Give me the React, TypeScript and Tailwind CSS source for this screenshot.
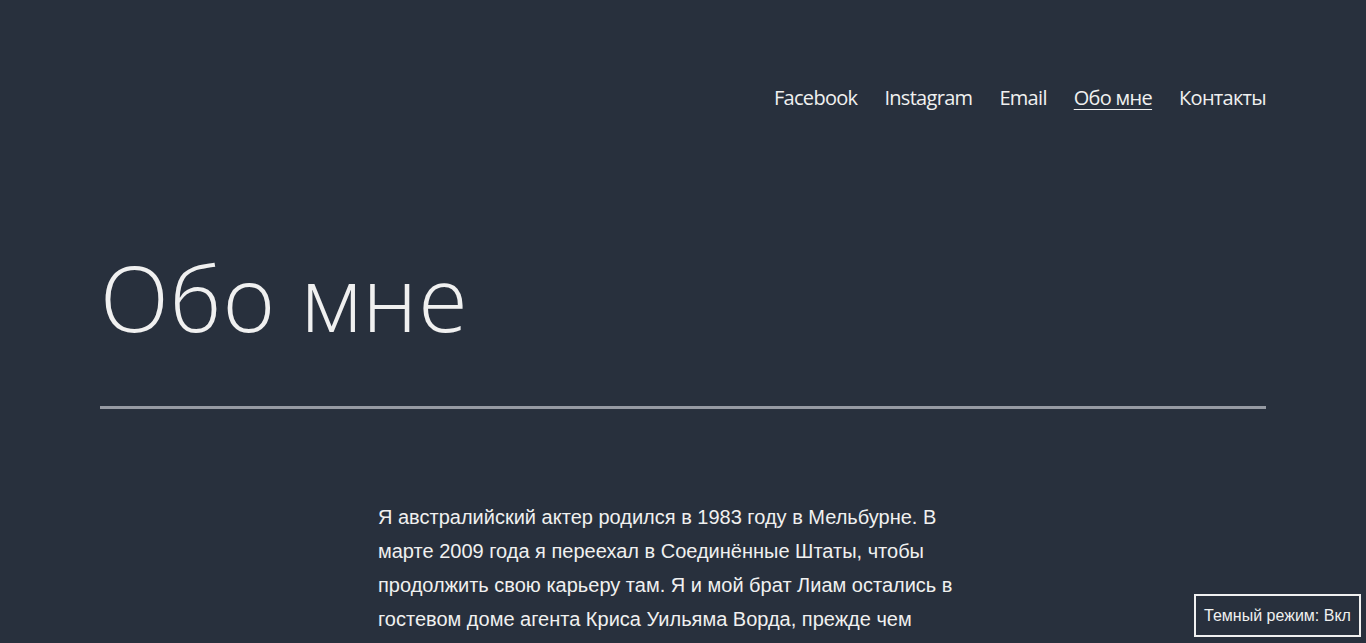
import React from "react";

export default function App() {
  const nav = ["Facebook", "Instagram", "Email", "Обо мне", "Контакты"];
  return (
    <div className="min-h-screen bg-[#28303d] text-[#f0f0f0] overflow-hidden h-[643px] relative">
      <header className="px-[100px] pt-[84px] flex justify-end">
        <nav className="flex gap-[27px] font-['Open_Sans',sans-serif] text-[20px] leading-[28px] tracking-[-0.7px]">
          {nav.map((n) => (
            <a
              key={n}
              className={n === "Обо мне" ? "underline underline-offset-[4px] decoration-1" : ""}
            >
              {n}
            </a>
          ))}
        </nav>
      </header>
      <main>
        <div className="px-[100px]">
          <h1 className="mt-[130px] font-['Open_Sans',sans-serif] font-light text-[90px] leading-[110px] tracking-[1px]">
            Обо мне
          </h1>
          <div className="mt-[54px] h-[3px] bg-[#969aa3]" />
        </div>
        <div className="mx-auto w-[610px] mt-[91px] font-['Liberation_Sans',Arial,sans-serif] text-[20px] leading-[34px]">
          <p>
            Я австралийский актер родился в 1983 году в Мельбурне. В марте 2009 года я переехал в Соединённые Штаты, чтобы продолжить свою карьеру там. Я и мой брат Лиам остались в гостевом доме агента Криса Уильяма Ворда, прежде чем
          </p>
        </div>
      </main>
      <button className="absolute right-[5px] bottom-[6px] w-[167px] h-[43px] border-2 border-[#f0f0f0] bg-[#28303d] text-[#f0f0f0] font-['Liberation_Sans',Arial,sans-serif] text-[16px] flex items-center justify-center">
        Темный режим: Вкл
      </button>
    </div>
  );
}
